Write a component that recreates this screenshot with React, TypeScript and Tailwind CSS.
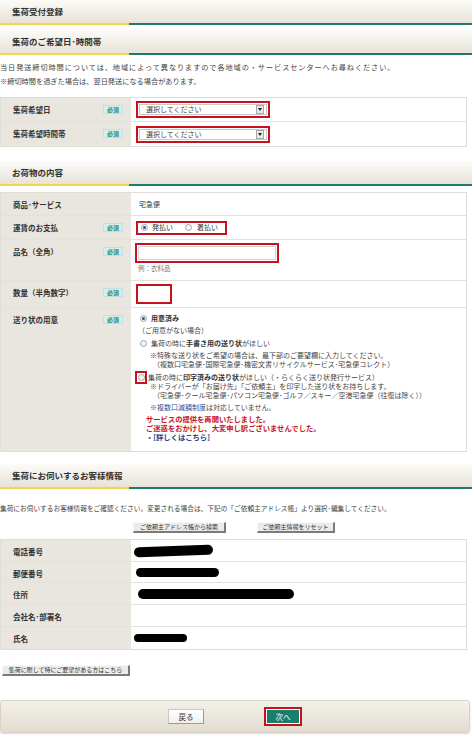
import type { ReactNode } from 'react';

// small section title band with the two-tone underline
function SectionHeader({ title, className = '' }: { title: string; className?: string }) {
  return (
    <div className={`w-[472px] ${className}`}>
      <div className="h-[23px] flex items-center pl-[12px] bg-linear-to-b from-[#fcfbf8] to-[#e8e3d8] text-[8.5px] font-bold text-[#333]">
        {title}
      </div>
      <div className="flex h-[2px]">
        <div className="w-[129px] bg-[#f1d54a]" />
        <div className="flex-1 bg-[#1f7a6b]" />
      </div>
    </div>
  );
}

function Badge() {
  return (
    <span className="w-[20px] h-[9px] flex items-center justify-center bg-[#d6eeea] border border-[#c4e2dd] text-[6px] leading-none font-bold text-[#2b8a7a]">
      必須
    </span>
  );
}

function Row({
  label,
  required,
  h,
  children,
  last,
}: {
  label: string;
  required?: boolean;
  h: string;
  children?: ReactNode;
  last?: boolean;
}) {
  return (
    <div className={`flex ${h} ${last ? '' : 'border-b border-[#e4e1da]'}`}>
      <div className="w-[130px] shrink-0 bg-[#e9e6df] flex items-start justify-between pl-[12px] pr-[8px] pt-[7px]">
        <span className="text-[7.5px] leading-[10px] font-bold text-[#333]">{label}</span>
        {required && <Badge />}
      </div>
      <div className="flex-1 bg-white">{children}</div>
    </div>
  );
}

function Radio({ checked }: { checked?: boolean }) {
  return (
    <span className="w-[7px] h-[7px] rounded-full border border-[#9aa4ad] bg-[#f4f5f6] flex items-center justify-center shrink-0">
      {checked && <span className="w-[3px] h-[3px] rounded-full bg-[#234f8f]" />}
    </span>
  );
}

function SelectBox() {
  return (
    <div className="ml-[5px] w-[134px] h-[17px] border-2 border-[#c4121e] p-px">
      <div className="h-full bg-white border border-[#c9c9c9] flex items-center justify-between pl-[6px] pr-[2px]">
        <span className="text-[7px] text-[#444]">選択してください</span>
        <span className="w-[8px] h-[9px] bg-[#e9e9e9] border border-[#a8a8a8] flex items-center justify-center">
          <span className="w-0 h-0 border-l-[2px] border-r-[2px] border-t-[3px] border-l-transparent border-r-transparent border-t-[#222]" />
        </span>
      </div>
    </div>
  );
}

function GrayButton({ children, className = '' }: { children: ReactNode; className?: string }) {
  return (
    <button
      type="button"
      className={`h-[11px] flex items-center justify-center whitespace-nowrap overflow-hidden bg-[#ebebeb] border-t border-l border-[#f8f8f8] border-r-2 border-b-2 border-r-[#7a7a7a] border-b-[#7a7a7a] text-[6px] leading-none text-[#333] ${className}`}
    >
      {children}
    </button>
  );
}

function Blob({ w, h, className = '' }: { w: string; h: string; className?: string }) {
  return <div className={`${w} ${h} rounded-full bg-black ${className}`} />;
}

export default function App() {
  return (
    <div className="w-[474px] min-h-[739px] bg-white font-['Noto_Sans_CJK_JP','Noto_Sans',sans-serif] text-[#333]">
      <SectionHeader title="集荷受付登録" />
      <SectionHeader title="集荷のご希望日･時間帯" className="mt-[5px]" />

      <div className="mt-[6px] text-[7.2px] leading-[13.5px] text-[#444]">
        <p className="tracking-[0.9px]">当日発送締切時間については、地域によって異なりますので各地域の・サービスセンターへお尋ねください。</p>
        <p>※締切時間を過ぎた場合は、翌日発送になる場合があります。</p>
      </div>

      {/* pickup date / time */}
      <div className="mt-[9px] w-[467px] border border-[#e0ddd6]">
        <Row label="集荷希望日" required h="h-[24px]">
          <div className="h-full flex items-center">
            <SelectBox />
          </div>
        </Row>
        <Row label="集荷希望時間帯" required h="h-[24px]" last>
          <div className="h-full flex items-center">
            <SelectBox />
          </div>
        </Row>
      </div>

      <SectionHeader title="お荷物の内容" className="mt-[14px]" />

      <div className="mt-[6px] w-[467px] border border-[#e0ddd6]">
        <Row label="商品･サービス" h="h-[23px]">
          <div className="h-full flex items-center pl-[8px] text-[7px]">宅急便</div>
        </Row>
        <Row label="運賃のお支払" required h="h-[24px]">
          <div className="h-full flex items-center pl-[5px]">
            <div className="w-[91px] h-[14px] border-2 border-[#c4121e] flex items-center pl-[3px] text-[7px] text-[#333]">
              <Radio checked />
              <span className="ml-[4px]">発払い</span>
              <span className="ml-[12px]">
                <Radio />
              </span>
              <span className="ml-[5px]">着払い</span>
            </div>
          </div>
        </Row>
        <Row label="品名（全角）" required h="h-[41px]">
          <div className="pl-[4px] pt-[3px]">
            <div className="w-[144px] h-[20px] border-2 border-[#c4121e] p-px">
              <div className="h-full bg-white border border-[#d2d2d2]" />
            </div>
            <div className="mt-[1px] pl-[3px] text-[6.5px] leading-[9px] text-[#777]">例：衣料品</div>
          </div>
        </Row>
        <Row label="数量（半角数字）" required h="h-[27px]">
          <div className="pl-[5px] pt-[3px]">
            <div className="w-[36px] h-[20px] border-2 border-[#c4121e] bg-white" />
          </div>
        </Row>
        <Row label="送り状の用意" required h="h-[143px]" last>
          <div className="pl-[9px] pt-[5px] text-[7px] leading-[10px] text-[#444]">
            <div className="flex items-center h-[10px]">
              <Radio checked />
              <span className="ml-[4px] font-bold text-[#333]">用意済み</span>
            </div>
            <div className="mt-[2px] -ml-[2px]">（ご用意がない場合）</div>
            <div className="mt-[3px] flex items-center h-[10px]">
              <Radio />
              <span className="ml-[4px]">
                集荷の時に<b className="text-[#333]">手書き用の送り状</b>がほしい
              </span>
            </div>
            <div className="mt-[3px] pl-[10px] leading-[9px]">※特殊な送り状をご希望の場合は、最下部のご要望欄に入力してください。</div>
            <div className="pl-[13px] leading-[9px]">（複数口宅急便･国際宅急便･機密文書リサイクルサービス･宅急便コレクト）</div>
            <div className="mt-[3px] flex items-center h-[10px]">
              <span className="-ml-[5px] w-[12px] h-[13px] border-2 border-[#c4121e] flex items-center justify-center">
                <Radio />
              </span>
              <span className="ml-[1px]">
                集荷の時に<b className="text-[#333]">印字済みの送り状</b>がほしい（・らくらく送り状発行サービス）
              </span>
            </div>
            <div className="pl-[10px] leading-[9px]">※ドライバーが「お届け先」「ご依頼主」を印字した送り状をお持ちします。</div>
            <div className="pl-[13px] leading-[9px]">（宅急便･クール宅急便･パソコン宅急便･ゴルフ／スキー／空港宅急便（往復は除く））</div>
            <div className="mt-[3px] pl-[10px] leading-[9px]">
              ※<span className="text-[#2d4f9c]">複数口減額制度</span>は対応していません。
            </div>
            <div className="mt-[3px] pl-[6px] leading-[9px] text-[7.3px] font-bold text-[#c8141f]">
              <div>サービスの提供を再開いたしました。</div>
              <div>ご迷惑をおかけし、大変申し訳ございませんでした。</div>
              <div className="text-[#2a3f86]">・[詳しくはこちら]</div>
            </div>
          </div>
        </Row>
      </div>

      <SectionHeader title="集荷にお伺いするお客様情報" className="mt-[12px]" />

      <p className="mt-[14px] text-[6.7px] leading-[10px] text-[#444] whitespace-nowrap">
        集荷にお伺いするお客様情報をご確認ください。変更される場合は、下記の「ご依頼主アドレス帳」より選択･編集してください。
      </p>

      <div className="mt-[9px] flex pl-[133px]">
        <GrayButton className="w-[93px]">ご依頼主アドレス帳から検索</GrayButton>
        <GrayButton className="ml-[31px] w-[78px]">ご依頼主情報をリセット</GrayButton>
      </div>

      <div className="mt-[6px] w-[467px] border border-[#e0ddd6]">
        <Row label="電話番号" h="h-[22px]">
          <div className="h-full flex items-center pl-[3px]">
            <Blob w="w-[79px]" h="h-[10px]" className="-rotate-2" />
          </div>
        </Row>
        <Row label="郵便番号" h="h-[21px]">
          <div className="h-full flex items-center pl-[5px]">
            <Blob w="w-[83px]" h="h-[9px]" />
          </div>
        </Row>
        <Row label="住所" h="h-[22px]">
          <div className="h-full flex items-center pl-[7px]">
            <Blob w="w-[156px]" h="h-[10px]" />
          </div>
        </Row>
        <Row label="会社名･部署名" h="h-[22px]" />
        <Row label="氏名" h="h-[22px]" last>
          <div className="h-full flex items-center pl-[3px]">
            <Blob w="w-[53px]" h="h-[8px]" />
          </div>
        </Row>
      </div>

      <div className="mt-[15px] pl-[2px]">
        <GrayButton className="w-[128px]">集荷に際して特にご要望がある方はこちら</GrayButton>
      </div>

      {/* footer nav */}
      <div className="mt-[24px] w-[470px] h-[33px] rounded-[3px] border border-[#d9d3c7] bg-linear-to-b from-[#f4f1ea] to-[#e2dccf] shadow-[0_1px_2px_rgba(0,0,0,0.15)] flex items-center pl-[167px]">
        <button
          type="button"
          className="w-[36px] h-[15px] flex items-center justify-center whitespace-nowrap bg-linear-to-b from-white to-[#f0f0f0] border border-[#c8c8c8] border-r-[#9a9a9a] border-b-[#9a9a9a] text-[7.5px] leading-none text-[#333]"
        >
          戻る
        </button>
        <div className="ml-[60px] w-[38px] h-[19px] flex border-2 border-[#c4121e] p-px bg-white">
          <button
            type="button"
            className="flex-1 flex items-center justify-center whitespace-nowrap bg-[#1b7e6c] text-[7.5px] leading-none text-white"
          >
            次へ
          </button>
        </div>
      </div>
    </div>
  );
}
